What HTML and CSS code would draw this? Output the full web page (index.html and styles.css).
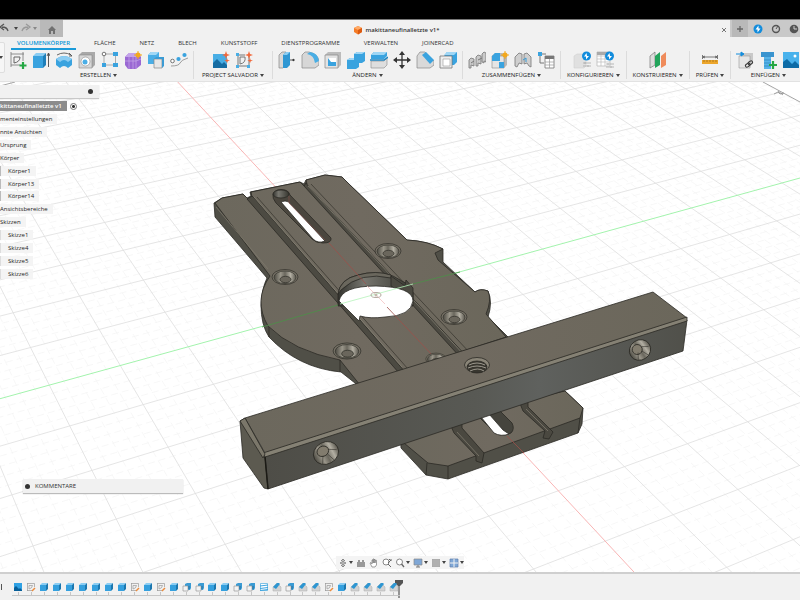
FILE: index.html
```html
<!DOCTYPE html>
<html lang="de">
<head>
<meta charset="utf-8">
<title>makittaneufinalletzte v1*</title>
<link rel="stylesheet" href="styles.css">
</head>
<body>
<svg class="defs" aria-hidden="true">
  <defs>
    <linearGradient id="wall" x1="0" x2="1"><stop offset="0" stop-color="#34342f"/><stop offset=".35" stop-color="#77766f"/><stop offset="1" stop-color="#36362f"/></linearGradient>
    <linearGradient id="cone" x1="0" x2="1"><stop offset="0" stop-color="#4c4a42"/><stop offset=".3" stop-color="#9a968a"/><stop offset=".5" stop-color="#6a675d"/><stop offset=".75" stop-color="#b3afa3"/><stop offset="1" stop-color="#5a574e"/></linearGradient>
    <linearGradient id="front" x1="0" x2="1"><stop offset="0" stop-color="#4e4d47"/><stop offset=".5" stop-color="#585954"/><stop offset=".65" stop-color="#5f615e"/><stop offset="1" stop-color="#50504a"/></linearGradient>
    <linearGradient id="face" x1="0" x2="1"><stop offset="0" stop-color="#6c685d"/><stop offset=".5" stop-color="#706a60"/><stop offset="1" stop-color="#6b675b"/></linearGradient>
  </defs>
  <symbol id="i-sketch" viewBox="0 0 18 18"><path d="M2 3h13M2 1v15M2 14h9M14 1v9" fill="none" stroke="#777" stroke-width=".8"/><path d="M5 12V6h6Q11 11 5 12z" fill="none" stroke="#666"/><path d="M14 11v7M10.500 14.500h7" stroke="#25a744" stroke-width="2.200"/></symbol>
  <symbol id="i-extrude" viewBox="0 0 18 18"><path d="M1 5l3-3h10l-3 3z" fill="#8bcdf3"/><path d="M1 5h10v12H1z" fill="#3aa3df"/><path d="M11 5l3-3v12l-3 3z" fill="#1f7fb9"/><path d="M16.500 16V3M15 5l1.500-3L18 5" fill="none" stroke="#333" stroke-width=".8"/></symbol>
  <symbol id="i-revolve" viewBox="0 0 18 18"><path d="M1 8q8-6 16 0v6l-4 3q-4-4-8 0l-4-3z" fill="#3aa3df"/><path d="M1 8q8-6 16 0l-4 3q-4-4-8 0z" fill="#8bcdf3"/><path d="M2 4q7-4 14 0M14 2l3 3-3 0" fill="none" stroke="#444" stroke-width=".8"/></symbol>
  <symbol id="i-hole" viewBox="0 0 18 18"><path d="M1 4l3-3h13v13l-3 3H1z" fill="#a9a9a9"/><path d="M1 4h13v13H1z" fill="#d7d7d7" stroke="#888" stroke-width=".6"/><circle cx="7.500" cy="10.500" r="4.500" fill="#fff" stroke="#888" stroke-width=".6"/><path d="M7.500 6a4.500 4.500 0 0 1 0 9 4 4 0 0 0 0-9z" fill="#3aa3df"/><circle cx="7" cy="11" r="2.500" fill="#4aaee6"/></symbol>
  <symbol id="i-pattern" viewBox="0 0 18 18"><path d="M4 3h10M3 4v10M5 14h9M14.500 4v9" fill="none" stroke="#999" stroke-width=".8"/><circle cx="3" cy="3" r="1.800" fill="#fff" stroke="#555" stroke-width=".8"/><path d="M12 1h5v4h-5zM1 12h4v4H1zM12 12h5v4h-5z" fill="#3aa3df"/></symbol>
  <symbol id="i-form" viewBox="0 0 18 18"><path d="M1 6l4-4h9l3 4v8l-5 4H4l-3-4z" fill="#9a68d3"/><path d="M1 6l4-4h9l-2 4z" fill="#c4a3ea"/><path d="M1 10h11l5-2M5 6v12M9 6v12M12 6v12" fill="none" stroke="#c7aaea" stroke-width=".7"/><circle cx="14" cy="4" r="2.500" fill="#f3a81d"/><path d="M14 0v8M10 4h8" stroke="#f3a81d"/></symbol>
  <symbol id="i-combine" viewBox="0 0 18 18"><path d="M1 4l3-3h8v9l-3 3H1z" fill="#4aaee6"/><path d="M1 4l3-3h8L9 4z" fill="#a1d8f6"/><path d="M7 8h8v9H7z" fill="#e7e7e7" stroke="#888" stroke-width=".7"/><path d="M7 8l2-2h8v9l-2 2V8z" fill="#3c9bd4"/></symbol>
  <symbol id="i-path" viewBox="0 0 18 18"><path d="M1 15q8 0 9-3t8-5" fill="none" stroke="#888" stroke-width=".8"/><circle cx="2.500" cy="10" r="1.800" fill="#fff" stroke="#555" stroke-width=".8"/><circle cx="8.500" cy="8" r="2.100" fill="#3aa3df"/><circle cx="14.500" cy="4" r="2.100" fill="#3aa3df"/></symbol>
  <symbol id="i-picstar" viewBox="0 0 18 18"><path d="M1 3h14v14H1z" fill="#49aee5"/><path d="M1 12l4-4 5 5 2-2 3 3v3H1z" fill="#176da3"/><path d="M14 0l1 3 3 1-3 1-1 3-1-3-3-1 3-1zM15 7l.7 2 2.300.5-2.300.8-.7 2-.7-2-2-.8 2-.5z" fill="#f2683a"/></symbol>
  <symbol id="i-sketchstar" viewBox="0 0 18 18"><path d="M3 3v12h11V4M3 4h7M5 13V6h5Q11 12 5 13" fill="none" stroke="#777"/><path d="M1 2h3v3H1zM1 14h3v3H1zM12 14h3v3h-3z" fill="#49aee5"/><path d="M14 0l1 3 3 1-3 1-1 3-1-3-3-1 3-1zM15 7l.7 2 2.300.5-2.300.8-.7 2-.7-2-2-.8 2-.5z" fill="#f2683a"/></symbol>
  <symbol id="i-press" viewBox="0 0 18 18"><path d="M1 4l3-3h4v13l-3 3H1z" fill="#d7d7d7" stroke="#888" stroke-width=".7"/><path d="M5 4l3-3h4v13l-3 3H5z" fill="#2f97d3"/><path d="M5 4l3-3h4L9 4z" fill="#8bcdf3"/><path d="M12 9h4M15 8l1.500 1-1.500 1z" stroke="#333" fill="#333" stroke-width=".8"/></symbol>
  <symbol id="i-fillet" viewBox="0 0 18 18"><path d="M1 4l3-3h4q9 2 10 9v4l-4 3H1z" fill="#d7d7d7" stroke="#888" stroke-width=".7"/><path d="M6 3l3-2q8 1 9 9l-4 2Q13 4 6 3z" fill="#49aee5"/></symbol>
  <symbol id="i-shell" viewBox="0 0 18 18"><path d="M1 4l3-3h13v13l-3 3H1z" fill="#bcbcbc"/><path d="M1 4h13v13H1z" fill="#e3e3e3" stroke="#888" stroke-width=".7"/><path d="M4 7h8v8H4z" fill="#fff"/><path d="M4 7l3 4h5v4H4z" fill="#3aa3df"/></symbol>
  <symbol id="i-union" viewBox="0 0 18 18"><path d="M0 9l3-2h4V3l3-2h8v9l-3 2h-3v4l-3 2H0z" fill="#3aa3df"/><path d="M7 3l3-2h8l-3 2zM0 9l3-2h4v2z" fill="#9fd6f5"/></symbol>
  <symbol id="i-split" viewBox="0 0 18 18"><path d="M1 4l3-3h13v4l-3 3H1z" fill="#3aa3df"/><path d="M1 4l3-3h13l-3 3z" fill="#9fd6f5"/><path d="M1 10h13l3-3v7l-3 3H1z" fill="#dedede" stroke="#888" stroke-width=".6"/><path d="M0 9h14l4-3" fill="none" stroke="#1e85c1" stroke-width="1.400"/></symbol>
  <symbol id="i-move" viewBox="0 0 18 18"><path d="M9 3v12M3 9h12" stroke="#333" stroke-width="1.300"/><path d="M9 0l3 4H6zM9 18l3-4H6zM0 9l4-3v6zM18 9l-4-3v6z" fill="#333"/></symbol>
  <symbol id="i-chamfer" viewBox="0 0 18 18"><path d="M1 5l3-4h5l9 9v4l-4 3H1z" fill="#d9d9d9" stroke="#888" stroke-width=".7"/><path d="M6 4l4-3 8 8-4 4z" fill="#3aa3df"/></symbol>
  <symbol id="i-offset" viewBox="0 0 18 18"><path d="M5 5l3-4h10v10l-3 3H5z" fill="#3aa3df"/><path d="M8 1h10l-3 3H5z" fill="#9fd6f5"/><path d="M1 5h12v12H1z" fill="#eee" stroke="#777" stroke-width=".8"/><path d="M4 8h7v7H4z" fill="#fff" stroke="#999" stroke-width=".6"/></symbol>
  <symbol id="i-joint" viewBox="0 0 18 18"><path d="M1 17V9l2-2 3 1v7l-3-1v3zM8 15V6l2-2 3 1v8l-3-1v3zM14 11V3l2-2 2 1v9l-2-1v2z" fill="#c9c9c9" stroke="#777" stroke-width=".8"/><path d="M3 12l3-2M10 9l4-2" stroke="#777"/></symbol>
  <symbol id="i-newcomp" viewBox="0 0 18 18"><path d="M1 5l3-3h12v12l-3 3H1z" fill="#b9b9b9"/><path d="M1 5h12v12H1z" fill="#e5e5e5" stroke="#888" stroke-width=".6"/><path d="M1 5l3-3h5v8H1zM8 11h5v6H8z" fill="#3aa3df"/><circle cx="14" cy="4" r="2.500" fill="#f3a81d"/><path d="M14 0v8M10 4h8" stroke="#f3a81d"/></symbol>
  <symbol id="i-asbuilt" viewBox="0 0 18 18"><path d="M1 15V6l4-4 3 1v10l-3-1-2 4zM17 16V6l-4-4-3 1v10l3-1 2 3z" fill="#cfcfcf" stroke="#777" stroke-width=".8"/><path d="M9 9l3-2v4" fill="none" stroke="#3a9bd4"/></symbol>
  <symbol id="i-table" viewBox="0 0 18 18"><path d="M1 1h4v4H1z" fill="#3aa3df"/><path d="M3 5v7h4M5 3h4" fill="none" stroke="#777"/><path d="M8 5h9v12H8z" fill="#fff" stroke="#777" stroke-width=".8"/><path d="M8 5h9v3H8z" fill="#777"/><path d="M8 11h9M8 14h9M12.500 8v9" stroke="#999" stroke-width=".7"/></symbol>
  <symbol id="i-config" viewBox="0 0 18 18"><path d="M1 5l3-2h9v12l-2 2H1z" fill="#e0e0e0" stroke="#d0d0d0" stroke-width=".6"/><circle cx="13.500" cy="5" r="4.500" fill="#128cdc"/><path d="M13.500 2L11 5.500h2v3L16 5h-2z" fill="#fff"/><path d="M10 12h8M10 15h8M12 11v2M15 14v2" stroke="#aaa" stroke-width=".8"/></symbol>
  <symbol id="i-configtable" viewBox="0 0 18 18"><path d="M1 1h13v14H1z" fill="#fff" stroke="#bbb" stroke-width=".8"/><path d="M1 5h13M1 8h13M1 11h13M5 1v14M9 1v14" stroke="#bbb" stroke-width=".7"/><path d="M1 1h13v3H1z" fill="#aaa"/><circle cx="13.500" cy="5" r="4.500" fill="#128cdc"/><path d="M13.500 2L11 5.500h2v3L16 5h-2z" fill="#fff"/><path d="M10 13h8M10 16h8M12 12v2M15 15v2" stroke="#aaa" stroke-width=".8"/></symbol>
  <symbol id="i-plane" viewBox="0 0 18 18"><path d="M1 5l5-4v13l-5 3z" fill="#ddd" stroke="#777" stroke-width=".7"/><path d="M6 5l5-4v13l-5 3z" fill="#22a45b"/><path d="M12 5l5-4v13l-5 3z" fill="#ef8b5b"/></symbol>
  <symbol id="i-measure" viewBox="0 0 18 18"><path d="M1 9h16v4H1z" fill="#eca62c"/><path d="M3 9v2M6 9v2M9 9v2M12 9v2M15 9v2" stroke="#8a5c0f" stroke-width=".6"/><path d="M1.500 4v4M16.500 4v4M2 6h14M4 5L2 6l2 1M14 5l2 1-2 1" fill="none" stroke="#444" stroke-width=".7"/></symbol>
  <symbol id="i-derive" viewBox="0 0 18 18"><path d="M3 5l3-3h11v9l-3 5H3z" fill="#c9c9c9"/><path d="M3 5h11v12H3z" fill="#e5e5e5" stroke="#999" stroke-width=".6"/><path d="M0 3h6M5 1l3 2-3 2z" fill="#128cdc" stroke="#128cdc"/><rect x="9" y="13" width="5" height="3" rx="1.500" transform="rotate(-35 11 14)" fill="none" stroke="#333"/><rect x="12" y="10" width="5" height="3" rx="1.500" transform="rotate(-35 15 12)" fill="none" stroke="#333"/></symbol>
  <symbol id="i-bolt" viewBox="0 0 18 18"><path d="M2 1h13v5H2z" fill="#3a94cf"/><path d="M5 6h7v12H5z" fill="#56b3e8"/><path d="M5 9h7M5 12h7M5 15h7" stroke="#2a82bc" stroke-width=".7"/><path d="M14 10v8M10 14h8" stroke="#25a744" stroke-width="2.200"/></symbol>
  <symbol id="i-image" viewBox="0 0 18 18"><path d="M1 1h16v16H1z" fill="#49b2ec"/><path d="M1 11l4-3 5 5 3-3 4 4v3H1z" fill="#0d6ba6"/><circle cx="13" cy="5" r="1.500" fill="#fff"/></symbol>

  <symbol id="t-image" viewBox="0 0 10 10"><path d="M1 1h8v8H1z" fill="#2fa1e4"/><path d="M1 6l2-2 3 3 1-1 2 2v1H1z" fill="#075f99"/></symbol>
  <symbol id="t-sketch" viewBox="0 0 10 10"><path d="M1.500 1v8M1 1.500h7.500V5M1 8.500h5M3 7V3.500h3.500Q6 6.500 3 7" fill="none" stroke="#999" stroke-width=".7"/><path d="M6 9l3-3" stroke="#eb8b3c" stroke-width="1.400"/></symbol>
  <symbol id="t-box" viewBox="0 0 10 10"><path d="M1 3l2-2h6L7 3z" fill="#8bcdf3"/><path d="M1 3h6v6H1z" fill="#35a0de"/><path d="M7 3l2-2v6L7 9z" fill="#1b77af"/></symbol>
  <symbol id="t-copy" viewBox="0 0 10 10"><path d="M3 2l2-1h4v5L8 8H3z" fill="#3a9bd4"/><path d="M1 4h5v5H1z" fill="#f3f3f3" stroke="#999" stroke-width=".7"/><path d="M7 4v3" stroke="#226f9c"/></symbol>
  <symbol id="t-thread" viewBox="0 0 10 10"><path d="M1.500 1.500h7v7h-7z" fill="#fff" stroke="#4baadd" stroke-width=".7"/><path d="M1 4l8-1M1 6.500l8-1M1 8.500l8-1" stroke="#3aa3df"/></symbol>
  <symbol id="t-cham" viewBox="0 0 10 10"><path d="M1 5l4-4 4 4v4H1z" fill="#d2d2d2" stroke="#aaa" stroke-width=".5"/><path d="M1 5l4-4h2l1 1-4 5z" fill="#2d96d2"/></symbol>

  <symbol id="csink" viewBox="-14 -10 28 20"><ellipse rx="13" ry="7.500" fill="#777267" stroke="#2e2d27" stroke-width=".7"/><ellipse cy=".3" rx="11" ry="6.300" fill="url(#cone)" stroke="#2e2d27" stroke-width=".6"/><ellipse cx=".5" cy="2.500" rx="5.500" ry="3.200" fill="#6a665c" stroke="#2e2d27" stroke-width=".7"/></symbol>
</svg>

<div class="letterbox"></div>
<header class="titlebar">
  <div class="quick">
    <button aria-label="Rückgängig"><svg width="14" height="10" viewBox="0 0 14 10"><path d="M9 8Q8 4 3 4M5 1L1 4l4 3" fill="none" stroke="#555" stroke-width="1.300"/></svg></button>
    <i class="caret"></i>
    <button aria-label="Wiederholen"><svg width="14" height="10" viewBox="0 0 14 10"><path d="M4 8Q5 4 10 4M8 1l4 3-4 3" fill="none" stroke="#999" stroke-width="1.300"/></svg></button>
    <i class="caret caret-dim"></i>
  </div>
  <button class="home" aria-label="Startseite"><svg width="10" height="10" viewBox="0 0 10 10"><path d="M5 1L1 5h1v4h2V6h2v3h2V5h1z" fill="#707070"/></svg></button>
  <div class="doc-tab">
    <svg width="10" height="10" viewBox="0 0 10 10"><path d="M1 3l4-2 4 2v4L5 9.500 1 7z" fill="#f47b26"/><path d="M1 3l4-2 4 2-4 2z" fill="#ffab69"/><path d="M5 5l4-2v4L5 9.500z" fill="#dc5a10"/></svg>
    <span>makittaneufinalletzte v1*</span>
    <button class="close" aria-label="Schließen"><svg width="6" height="6" viewBox="0 0 6 6"><path d="M1 1l4 4M5 1L1 5" stroke="#666" stroke-width=".9"/></svg></button>
  </div>
  <div class="sys">
    <button class="add" aria-label="Neu"><svg width="8" height="8" viewBox="0 0 8 8"><path d="M4 1v6M1 4h6" stroke="#666" stroke-width="1.300"/></svg></button>
    <button aria-label="Erweiterungen"><svg width="10" height="10" viewBox="0 0 10 10"><circle cx="5" cy="5" r="4.500" fill="#128cdc"/><path d="M5.500 1.500L2.500 5.500h2v3l3-4h-2z" fill="#fff"/></svg></button>
    <button aria-label="Auftragsstatus"><svg width="10" height="10" viewBox="0 0 10 10"><circle cx="5" cy="5" r="3.500" fill="none" stroke="#555" stroke-width="1.400"/><path d="M5 5l2-3" fill="none" stroke="#555"/></svg></button>
    <button aria-label="Verlauf"><svg width="10" height="10" viewBox="0 0 10 10"><circle cx="5" cy="5" r="4.300" fill="#555"/><path d="M5 2v3h3" fill="none" stroke="#ddd" stroke-width=".9"/></svg></button>
  </div>
</header>

<section class="ribbon">
  <button class="workspace" aria-label="Arbeitsbereich"><i class="caret"></i></button>
  <nav class="tabs">
    <a href="#" class="active">VOLUMENKÖRPER</a><a href="#">FLÄCHE</a><a href="#">NETZ</a><a href="#">BLECH</a><a href="#">KUNSTSTOFF</a><a href="#">DIENSTPROGRAMME</a><a href="#">VERWALTEN</a><a href="#">JOINERCAD</a>
  </nav>
  <div class="groups">
    <div class="group tight"><div class="icons">
      <button aria-label="Skizze"><svg><use href="#i-sketch"/></svg></button><button aria-label="Extrusion"><svg><use href="#i-extrude"/></svg></button><button aria-label="Drehen"><svg><use href="#i-revolve"/></svg></button><button aria-label="Bohrung"><svg><use href="#i-hole"/></svg></button><button aria-label="Muster"><svg><use href="#i-pattern"/></svg></button><button aria-label="Form"><svg><use href="#i-form"/></svg></button><button aria-label="Ableiten"><svg><use href="#i-combine"/></svg></button><button aria-label="Pfad"><svg><use href="#i-path"/></svg></button>
    </div><button class="menu">ERSTELLEN<i class="caret"></i></button></div>
    <div class="group wide"><div class="icons">
      <button aria-label="Bild"><svg><use href="#i-picstar"/></svg></button><button aria-label="Skizze erzeugen"><svg><use href="#i-sketchstar"/></svg></button>
    </div><button class="menu">PROJECT SALVADOR<i class="caret"></i></button></div>
    <div class="group tight"><div class="icons">
      <button aria-label="Drücken"><svg><use href="#i-press"/></svg></button><button aria-label="Abrunden"><svg><use href="#i-fillet"/></svg></button><button aria-label="Schale"><svg><use href="#i-shell"/></svg></button><button aria-label="Kombinieren"><svg><use href="#i-union"/></svg></button><button aria-label="Teilen"><svg><use href="#i-split"/></svg></button><button aria-label="Verschieben"><svg><use href="#i-move"/></svg></button><button aria-label="Fase"><svg><use href="#i-chamfer"/></svg></button><button aria-label="Versatz"><svg><use href="#i-offset"/></svg></button>
    </div><button class="menu">ÄNDERN<i class="caret"></i></button></div>
    <div class="group tight"><div class="icons">
      <button aria-label="Gelenk"><svg><use href="#i-joint"/></svg></button><button aria-label="Komponente"><svg><use href="#i-newcomp"/></svg></button><button aria-label="Verbindung"><svg><use href="#i-asbuilt"/></svg></button><button aria-label="Stückliste"><svg><use href="#i-table"/></svg></button>
    </div><button class="menu">ZUSAMMENFÜGEN<i class="caret"></i></button></div>
    <div class="group"><div class="icons">
      <button aria-label="Konfiguration"><svg><use href="#i-config"/></svg></button><button aria-label="Tabelle"><svg><use href="#i-configtable"/></svg></button>
    </div><button class="menu">KONFIGURIEREN<i class="caret"></i></button></div>
    <div class="group"><div class="icons"><button aria-label="Ebene"><svg><use href="#i-plane"/></svg></button></div><button class="menu">KONSTRUIEREN<i class="caret"></i></button></div>
    <div class="group"><div class="icons"><button aria-label="Messen"><svg><use href="#i-measure"/></svg></button></div><button class="menu">PRÜFEN<i class="caret"></i></button></div>
    <div class="group tight"><div class="icons">
      <button aria-label="Ableitung"><svg><use href="#i-derive"/></svg></button><button aria-label="Verbindungselement"><svg><use href="#i-bolt"/></svg></button><button aria-label="Leinwand"><svg><use href="#i-image"/></svg></button>
    </div><button class="menu">EINFÜGEN<i class="caret"></i></button></div>
  </div>
</section>

<main class="canvas">
  <svg class="scene" viewBox="0 82 800 490" preserveAspectRatio="xMidYMid slice" role="img" aria-label="Modell">
    <g fill="none">
      <path id="minor" stroke="#f3f3f3" stroke-width=".7" stroke-dasharray="7 4"/>
      <path id="major" stroke="#dedede" stroke-width=".8"/>
      <path id="axis-y" stroke="#a3f3ad"/>
      <path id="axis-x" stroke="#f9b5b5"/>
      <path d="M763 82l37 20M0 86l15-4" stroke="#a5a5a5"/>
      <path d="M774 94l4-2 2 2 4-1M778 91l5 4" stroke="#888" stroke-width=".8"/>
    </g>
    <g stroke="#2b2a24" stroke-width=".8" stroke-linejoin="round">
      <!-- lower end of the plate -->
      <path d="M400 430L565 391 583 408 582 424 578 433 448 479 426 475 401 448z" fill="#504f47"/>
      <path d="M400 430L404 443 428 463 448 466 580 418 583 408 565 391z" fill="url(#face)"/>
      <path d="M427 463l-1 12M448 466v13M580 418l-2 15" fill="none"/>
      <path d="M450 424l4 9 22 23v5l6 2 2-10-22-25v-7zM519 401l4 10 22 20-2 7 6 1 4-7-25-25v-7z" fill="#4a4840"/>
      <path d="M457 432l22 24M526 409l22 22" fill="none" stroke="#7d796c"/>
      <path d="M478 416l17 17q8 4 16 0 4-4 1-10l-15-15z" fill="#45443d"/>
      <path d="M481 417l8-3 14 16 6 4q-8 3-15-1z" fill="#fff"/>
      <!-- upper part of the plate -->
      <path d="M214 203L222 198 243 194 247 198 251 196 250 192 300 182 304 184 306 180 325 175 342 177 350 185 407 240Q428 241 443 249V262L475 292Q480 288 488 291 493 302 488 317L508 337 360 387 341 372Q298 368 269 337 261 325 261 305 262 288 267 278L215 217z" fill="#504f47"/>
      <path d="M215 203L222 198 243 194 248 199 252 197 251 192 300 182 304 186 307 184 306 180 325 175 342 177 350 185 407 240Q428 241 443 249L435 253 438 260 475 292Q480 288 488 291 492 300 486 314L506 337 360 385 340 360Q293 351 268 326 253 300 270 276z" fill="url(#face)"/>
      <path d="M269 327v10M340 360v12" fill="none"/>
      <path d="M247 199L399 373h7L256 200l-4-4z" fill="#4c4a42"/>
      <path d="M304 186L461 358h7L309 187l-3-4z" fill="#4c4a42"/>
      <path d="M254 197L402 367M308 186L465 356" fill="none" stroke="#858174"/>
      <path d="M257 197L408 369M311 184L471 354" fill="none" stroke-width=".6"/>
      <path d="M216 207l52 62" fill="none" stroke="#7d796c"/>
      <!-- long slot -->
      <path d="M273 194q3-6 12-4 4 1 5 5l41 43q1 5-8 5-7 0-11-4l-36-36q-4-5-3-9z" fill="#4a463e"/>
      <path d="M281 202q4-2 8 0l36 39q-7 3-12-2z" fill="#fff"/>
      <path d="M289 196v7l36 37" fill="none" stroke="#7a4f48"/>
      <ellipse cx="281" cy="194" rx="8" ry="4" fill="url(#wall)"/>
      <!-- centre bore -->
      <path d="M338 294q2-15 20-19 18-5 35 1l16 9 4 8v13H338z" fill="url(#wall)"/>
      <path d="M338 294q2-15 20-19 18-5 33 0v3q-30-7-50 12z" fill="#6a675d"/>
      <path d="M391 276l14 10 1-6 7 8v12l-22-14z" fill="#4b4941"/>
      <path d="M339 301Q342 286 376 286 413 287 413 301 411 316 385 317 370 319 360 316L359 321z" fill="#fff"/>
    </g>
    <path d="M340 304L413 284" stroke="#b5f2ba" stroke-width=".8"/>
    <path d="M367 286l18 18" stroke="#f5c3c3" stroke-width=".8"/>
    <ellipse cx="376" cy="295" rx="5" ry="2.500" fill="none" stroke="#b5aaa0"/><circle cx="376" cy="295" r="1.500" fill="#c4b9ae"/>
    <path d="M262 327l76-22M413 284l47-12" stroke="#4b9148" stroke-width=".8"/>
    <path d="M329 243l37 41M387 307l47 50" stroke="#9c514a" stroke-width=".8"/>
    <use href="#csink" x="271" y="267" width="28" height="20"/>
    <use href="#csink" x="374" y="241" width="28" height="20"/>
    <use href="#csink" x="440" y="307" width="28" height="20"/>
    <use href="#csink" x="332" y="340" width="30" height="22"/>
    <use href="#csink" x="425" y="350" width="22" height="18"/>
    <path d="M507 436l17 17" stroke="#9c514a" stroke-width=".8"/>
    <!-- cross beam -->
    <g stroke="#2b2a24" stroke-width=".8" stroke-linejoin="round">
      <path d="M240 421l5-3 20 37 3 34-4-1-21-30z" fill="#5c5a50"/>
      <path d="M265 456L687 320l-4 31L268 489z" fill="url(#front)"/>
      <path d="M245 418L653 292l34 26L265 453z" fill="url(#face)"/>
      <path d="M263 453L687 317v4L265 457z" fill="#858174"/>
      <path d="M240 421l5-3 20 36-2 4z" fill="#7b776a"/>
      <path d="M265 457l3 32" fill="none" stroke="#1b1a15" stroke-width="1.500"/>
      <g transform="translate(326 453) rotate(-28)"><ellipse rx="13" ry="11" fill="url(#cone)"/><ellipse cx="-2" cy="-3" rx="6" ry="5" fill="#827c6e"/><path d="M-8 8l4-7M4 10L1 2M11 2L4-2" stroke-width=".5"/></g>
      <g transform="translate(640 350) rotate(-35)"><ellipse rx="11" ry="10" fill="url(#cone)"/><ellipse cx="-2" cy="-2" rx="5" ry="5" fill="#827c6e"/><path d="M-7 7l4-6M4 9L1 2M9 2L3-2" stroke-width=".5"/></g>
      <ellipse cx="477" cy="365" rx="12.500" ry="7.500" fill="#8a8578"/>
      <ellipse cx="477" cy="367" rx="10" ry="6" fill="#38362f"/>
      <path d="M469 365q8-4 16 0M468 368q9-4 18 0M470 371q8-4 14 0" fill="none" stroke="#b5b0a4"/>
    </g>
  </svg>

  <aside class="browser">
    <div class="search"><i class="dot"></i></div>
    <ul class="tree">
      <li class="root"><span>kittaneufinalletzte v1</span><input type="radio" checked aria-label="Komponente aktivieren"></li>
      <li><span>menteinstellungen</span></li>
      <li><span>nnte Ansichten</span></li>
      <li><span>Ursprung</span></li>
      <li><span>Körper</span></li>
      <li class="child"><span>Körper1</span></li>
      <li class="child"><span>Körper13</span></li>
      <li class="child"><span>Körper14</span></li>
      <li><span>Ansichtsbereiche</span></li>
      <li><span>Skizzen</span></li>
      <li class="child eye"><span>Skizze1</span></li>
      <li class="child eye"><span>Skizze4</span></li>
      <li class="child eye"><span>Skizze5</span></li>
      <li class="child eye"><span>Skizze6</span></li>
    </ul>
  </aside>
  <button class="comments"><i class="dot"></i>KOMMENTARE</button>
  <div class="navbar">
    <button aria-label="Orbit"><svg viewBox="0 0 10 10"><path d="M5 1v8M2 5q3-3 6 0-3 3-6 0M3 3l2-2 2 2M3 7l2 2 2-2" fill="none" stroke="#888"/></svg></button><i class="caret"></i>
    <button aria-label="Ansehen"><svg viewBox="0 0 10 10"><path d="M1 4h8v5H1zM2 2h2v2H2zM6 2h2v2H6z" fill="#999"/></svg></button>
    <button aria-label="Pan"><svg viewBox="0 0 10 10"><path d="M3 9L1 5l1-.5L3 6V2h1v3V1h1v4-3.500h1V5l.5-3 1 .3V7L6 9z" fill="#fff" stroke="#777" stroke-width=".7"/></svg></button>
    <button aria-label="Zoom"><svg viewBox="0 0 10 10"><circle cx="4" cy="4" r="3" fill="#fff" stroke="#888"/><path d="M6 6l3 3M7 1l2 2M9 1v2M6 5l3-3" stroke="#666"/></svg></button>
    <button aria-label="Einpassen"><svg viewBox="0 0 10 10"><circle cx="4.500" cy="4" r="3" fill="#fff" stroke="#888"/><path d="M6.500 6l2.500 3" stroke="#666" stroke-width="1.300"/></svg></button><i class="caret"></i>
    <button aria-label="Anzeige"><svg viewBox="0 0 10 10"><path d="M1 1h8v6H1z" fill="#7fa7d6" stroke="#8b8b8b" stroke-width=".7"/><path d="M3 9h4M5 7v2" stroke="#777"/></svg></button><i class="caret"></i>
    <button aria-label="Raster"><svg viewBox="0 0 10 10"><path d="M1 1h8v8H1z" fill="#a9a9a9"/><path d="M1 3h8M1 5h8M1 7h8M3 1v8M5 1v8M7 1v8" stroke="#bbb" stroke-width=".5"/></svg></button><i class="caret"></i>
    <button aria-label="Fenster"><svg viewBox="0 0 10 10"><path d="M1 1h8v8H1z" fill="#7fa7d6" stroke="#5f7fae" stroke-width=".7"/><path d="M5 1v8M1 5h8" stroke="#f3f3f3"/></svg></button><i class="caret"></i>
  </div>
</main>

<footer class="timeline">
  <i class="end-mark"></i>
  <div class="steps" id="steps"></div>
  <svg class="marker" width="8" height="18" viewBox="0 0 8 18"><path d="M0 0h8v3L5 6H3L0 3z" fill="#555"/><path d="M4 5v13" stroke="#555" stroke-width="1.200"/></svg>
</footer>
<script src="script.js"></script>
</body>
</html>
```
FILE: styles.css
```css
* { box-sizing: border-box; }

body {
  margin: 0;
  min-height: 100vh;
  display: flex;
  flex-direction: column;
  overflow: hidden;
  background: #f1f1f1;
  color: #333;
  font: 6px/8px "Open Sans", "Noto Sans", sans-serif;
}

button {
  margin: 0;
  padding: 0;
  border: 0;
  background: none;
  color: inherit;
  font: inherit;
  display: flex;
  align-items: center;
  justify-content: center;
}

svg { display: block; flex: none; }
.defs { position: absolute; width: 0; height: 0; }

.caret {
  flex: none;
  border: 2px solid transparent;
  border-top: 3px solid #444;
  border-bottom: 0;
}
.caret-dim { border-top-color: #888; }

.dot {
  width: 5px;
  height: 5px;
  border-radius: 50%;
  background: #333;
}

.letterbox { height: 20px; background: #000; border-bottom: 1px solid #777; }

/* title bar */
.titlebar { display: flex; height: 17px; background: #c9c9c9; }
.quick { display: flex; align-items: center; width: 40px; gap: 1px; padding-bottom: 1px; overflow: hidden; }
.quick button { margin-left: -1px; }
.home { width: 23px; padding-top: 2px; background: #b9b9b9; }
.doc-tab {
  flex: 1;
  display: flex;
  align-items: center;
  justify-content: center;
  gap: 2px;
  padding-top: 2px;
  position: relative;
  background: #f1f1f1;
  font-weight: 600;
}
.close { position: absolute; right: 3px; top: 7px; }
.sys { display: flex; align-items: center; gap: 8px; width: 70px; padding-left: 2px; overflow: hidden; }
.add { width: 16px; height: 17px; flex: none; margin-right: -3px; background: #b9b9b9; }

/* ribbon */
.ribbon {
  position: relative;
  height: 45px;
  background: #f1f1f1;
  border-bottom: 1px solid #e2e2e2;
  overflow: hidden;
}
.workspace {
  position: absolute;
  left: -16px;
  top: 5px;
  width: 21px;
  height: 31px;
  padding-left: 12px;
  border: 1px solid #dedede;
  border-radius: 2px;
  background: #f6f6f6;
}
.tabs { display: flex; gap: 24px; padding: 2px 0 0 17px; }
.tabs a { position: relative; height: 10px; color: #333; text-decoration: none; }
.tabs .active { color: #0696d7; font-weight: 600; }
.tabs .active::after {
  content: "";
  position: absolute;
  left: -6px;
  right: -6px;
  bottom: -1px;
  height: 2px;
  background: #1a9bd9;
}
.groups { display: flex; padding: 2px 0 0 4px; }
.group {
  flex: none;
  display: flex;
  flex-direction: column;
  align-items: center;
  gap: 2px;
  padding: 0 6px;
  border-right: 1px solid #dcdcdc;
}
.group.tight { padding: 0 5px; }
.group.wide { padding: 0 8px; }
.group:last-child { border: 0; }
.icons { display: flex; gap: 5px; }
.icons svg { width: 18px; height: 18px; }
.menu { gap: 2px; color: #222; }

/* canvas */
.canvas {
  position: relative;
  flex: 1;
  display: flex;
  flex-direction: column;
  align-items: flex-start;
  padding: 3px 0;
  overflow: hidden;
  background: #fff;
}
.scene { position: absolute; inset: 0; width: 100%; height: 100%; }
.browser, .comments, .navbar { position: relative; }
.search {
  display: flex;
  align-items: center;
  justify-content: flex-end;
  width: 99px;
  height: 13px;
  padding-right: 6px;
  background: #f1f1f1;
  box-shadow: 0 1px 1px #c8c8c8;
}
.tree {
  display: grid;
  grid-auto-rows: 1fr;
  height: 180px;
  margin: 2px 0 0;
  padding: 0;
  list-style: none;
}
.tree li { display: flex; align-items: center; }
.tree span { padding: 1px 5px 1px 0; background: rgba(243, 243, 243, .9); color: #222; }
.tree .child span { padding-left: 7px; border-left: 1px solid #bbb; }
.tree .eye span { border-left-color: #ddd; }
.tree .root span { background: #8c8c8c; color: #fff; font-weight: 600; }
.root input {
  appearance: none;
  width: 7px;
  height: 7px;
  margin: 0 0 0 3px;
  border: 1px solid #777;
  border-radius: 50%;
  background: radial-gradient(#333 0 1px, #fff 2px);
}
.comments {
  justify-content: flex-start;
  gap: 5px;
  width: 160px;
  height: 14px;
  margin: auto 0 63px 23px;
  padding-left: 2px;
  background: #f1f1f1;
  box-shadow: 0 1px 1px #bbb;
}
.navbar {
  display: flex;
  align-items: center;
  align-self: center;
  gap: 1px;
  height: 13px;
  padding: 0;
  background: #f4f4f4;
}
.navbar svg { width: 10px; height: 10px; }
.navbar button { margin-left: 2px; }

/* timeline */
.timeline {
  position: relative;
  display: flex;
  align-items: flex-start;
  height: 28px;
  padding-top: 6px;
  border-top: 2px solid #cfcfcf;
  background: #f1f1f1;
}
.end-mark { width: 2px; height: 6px; margin-top: 4px; border-right: 1px solid #555; }
.steps {
  display: grid;
  grid-auto-flow: column;
  grid-auto-columns: 1fr;
  width: 388px;
  margin: 2px 0 0 10px;
}
.step { height: 14px; align-items: flex-start; border-bottom: 1px solid #c6c6c6; position: relative; }
.step::after { content: ""; position: absolute; bottom: 0; width: 1px; height: 3px; background: #c6c6c6; }
.step svg { width: 10px; height: 10px; }
.marker { margin-left: -5px; }
```
FILE: script.js
```js
// Ground grid: maps plane coordinates (k, m) to the scene in perspective.
const project = (k, m) => {
  const w = 1 + 0.0199 * k - 0.037 * m;
  return ((376 + 66.32 * k + 15.8 * m) / w).toFixed(1) + " " +
         ((295 - 10.36 * k + 21 * m) / w).toFixed(1);
};
const lineK = (k) => "M" + project(k, -16) + "L" + project(k, 12);
const lineM = (m) => "M" + project(-12, m) + "L" + project(10.6, m);

let major = "", minor = "";
for (let i = -60; i <= 60; i++) {
  const v = i / 5;
  const onMajor = i % 5 === 0;
  if (v !== 0 && v <= 10.6) {
    if (onMajor) major += lineK(v); else minor += lineK(v);
  }
}
for (let i = -80; i <= 60; i++) {
  const v = i / 5;
  if (v !== 0) {
    if (i % 5 === 0) major += lineM(v); else minor += lineM(v);
  }
}
document.getElementById("major").setAttribute("d", major);
document.getElementById("minor").setAttribute("d", minor);
document.getElementById("axis-x").setAttribute("d", lineK(0));
document.getElementById("axis-y").setAttribute("d", lineM(0));

// Timeline features in order of creation.
const steps = ("image sketch box box box box box box box sketch box sketch box copy copy " +
  "box box copy copy thread cham copy cham cham sketch box cham cham cham cham").split(" ");
document.getElementById("steps").innerHTML = steps.map((s) =>
  `<button class="step" aria-label="${s}"><svg><use href="#t-${s}"/></svg></button>`).join("");
```
